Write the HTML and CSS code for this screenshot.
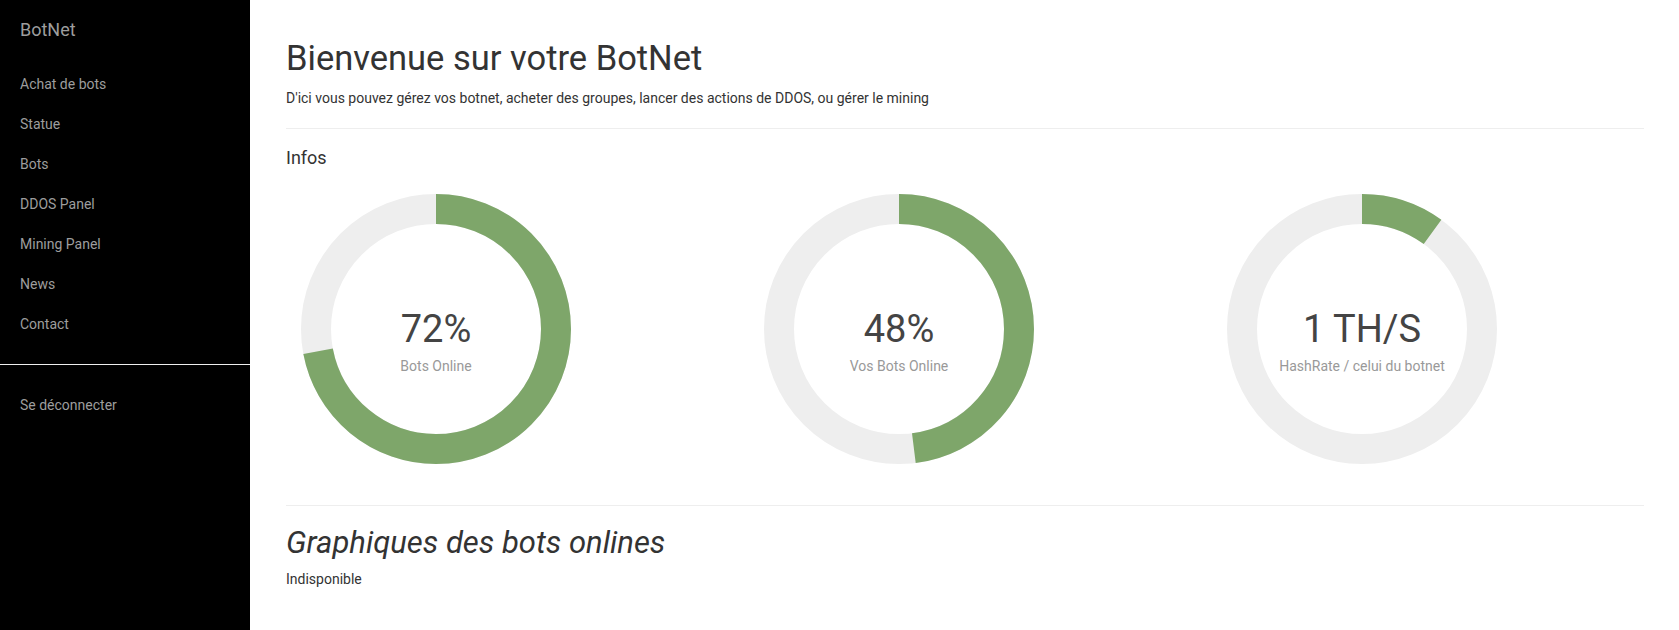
FILE: index.html
```html
<!DOCTYPE html>
<html lang="fr">
<head>
<meta charset="utf-8">
<title>BotNet</title>
<link rel="stylesheet" href="styles.css">
</head>
<body>
<div class="layout">
  <aside class="sidebar">
    <div class="brand">BotNet</div>
    <nav class="menu">
      <a class="menu-item" href="#">Achat de bots</a>
      <a class="menu-item" href="#">Statue</a>
      <a class="menu-item" href="#">Bots</a>
      <a class="menu-item" href="#">DDOS Panel</a>
      <a class="menu-item" href="#">Mining Panel</a>
      <a class="menu-item" href="#">News</a>
      <a class="menu-item" href="#">Contact</a>
    </nav>
    <div class="side-sep"></div>
    <nav class="menu">
      <a class="menu-item" href="#">Se déconnecter</a>
    </nav>
  </aside>
  <main class="main">
    <h1 class="title">Bienvenue sur votre BotNet</h1>
    <p class="subtitle">D'ici vous pouvez gérez vos botnet, acheter des groupes, lancer des actions de DDOS, ou gérer le mining</p>
    <hr class="rule">
    <h2 class="section-title">Infos</h2>
    <div class="donut-row">
      <div class="donut-col">
        <div class="donut">
          <svg class="donut-svg" width="270" height="270" viewBox="0 0 270 270">
            <circle class="track" cx="135" cy="135" r="120"></circle>
            <circle class="fill" cx="135" cy="135" r="120" style="stroke-dasharray: 542.87 753.98"></circle>
          </svg>
          <div class="donut-text">
            <div class="donut-value">72%</div>
            <div class="donut-label">Bots Online</div>
          </div>
        </div>
      </div>
      <div class="donut-col">
        <div class="donut">
          <svg class="donut-svg" width="270" height="270" viewBox="0 0 270 270">
            <circle class="track" cx="135" cy="135" r="120"></circle>
            <circle class="fill" cx="135" cy="135" r="120" style="stroke-dasharray: 361.91 753.98"></circle>
          </svg>
          <div class="donut-text">
            <div class="donut-value">48%</div>
            <div class="donut-label">Vos Bots Online</div>
          </div>
        </div>
      </div>
      <div class="donut-col">
        <div class="donut">
          <svg class="donut-svg" width="270" height="270" viewBox="0 0 270 270">
            <circle class="track" cx="135" cy="135" r="120"></circle>
            <circle class="fill" cx="135" cy="135" r="120" style="stroke-dasharray: 75.4 753.98"></circle>
          </svg>
          <div class="donut-text">
            <div class="donut-value">1 TH/S</div>
            <div class="donut-label">HashRate / celui du botnet</div>
          </div>
        </div>
      </div>
    </div>
    <hr class="rule rule-low">
    <h2 class="graph-title">Graphiques des bots onlines</h2>
    <p class="note">Indisponible</p>
  </main>
</div>
</body>
</html>
```
FILE: styles.css
```css
* { box-sizing: border-box; }
html, body { margin: 0; padding: 0; background: #fff; }
body {
  font-family: Roboto, "Liberation Sans", Arial, sans-serif;
  font-size: 14px;
  color: #333;
}
.layout {
  display: flex;
  min-height: 100vh;
}
.sidebar {
  width: 250px;
  flex: 0 0 250px;
  background: #000;
  padding-top: 20px;
}
.brand {
  font-size: 18px;
  line-height: 20px;
  color: #9d9d9d;
  padding-left: 20px;
  margin-bottom: 24px;
}
.menu {
  display: flex;
  flex-direction: column;
}
.menu-item {
  display: block;
  height: 40px;
  line-height: 40px;
  padding-left: 20px;
  font-size: 14px;
  color: #9d9d9d;
  text-decoration: none;
}
.side-sep {
  height: 1px;
  background: #eee;
  margin: 20px 0 20px;
}
.main {
  flex: 1;
  padding: 38px 35px 0 36px;
  min-width: 0;
}
.title {
  margin: 0;
  font-size: 34.5px;
  line-height: 40px;
  font-weight: 400;
  color: #333;
}
.subtitle {
  margin: 10px 0 0;
  font-size: 14px;
  line-height: 20px;
  color: #333;
}
.rule {
  border: 0;
  border-top: 1px solid #eee;
  margin: 20px 0 0;
  height: 0;
}
.section-title {
  margin: 17px 0 0;
  font-size: 18px;
  line-height: 24px;
  font-weight: 400;
  color: #333;
}
.donut-row {
  display: grid;
  grid-template-columns: 463px 463px 1fr;
  padding-left: 15px;
  margin-top: 24px;
}
.donut {
  position: relative;
  width: 270px;
  height: 270px;
}
.donut-svg { display: block; }
.track {
  fill: none;
  stroke: #eeeeee;
  stroke-width: 30;
}
.fill {
  fill: none;
  stroke: #7ea66a;
  stroke-width: 30;
  transform: rotate(-90deg);
  transform-origin: 135px 135px;
}
.donut-text {
  position: absolute;
  inset: 0;
  display: flex;
  flex-direction: column;
  align-items: center;
  justify-content: center;
  padding-top: 24px;
}
.donut-value {
  font-size: 38px;
  line-height: 44px;
  color: #444;
}
.donut-label {
  margin-top: 5px;
  font-size: 14px;
  line-height: 20px;
  color: #999;
}
.rule-low { margin-top: 41px; }
.graph-title {
  margin: 19px 0 0;
  font-size: 31px;
  line-height: 36px;
  font-weight: 400;
  font-style: italic;
  color: #333;
}
.note {
  margin: 8px 0 0;
  font-size: 14px;
  line-height: 20px;
  color: #333;
}
```
